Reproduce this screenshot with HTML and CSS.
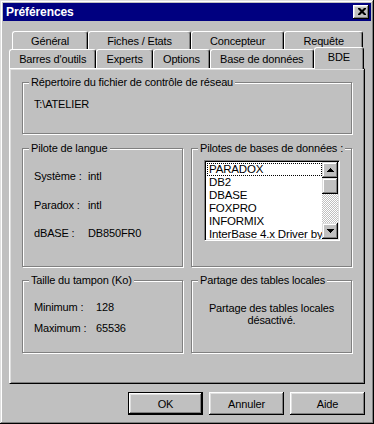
FILE: index.html
```html
<!DOCTYPE html>
<html lang="fr">
  <head>
    <meta charset="UTF-8" />
    <meta name="viewport" content="width=device-width, initial-scale=1.0" />
    <title>Préférences</title>
    <link rel="stylesheet" href="styles.css">
  </head>
  <body>
    <div class="window">
      <div class="titlebar">
        <span class="title">Préférences</span>
        <button class="close" aria-label="Fermer">
          <svg width="8" height="7" viewBox="0 0 8 7">
            <path d="M0 0h2l2 2 2-2h2v1L5.5 3.5 8 6v1H6L4 5 2 7H0V6l2.5-2.5L0 1z" fill="#000" />
          </svg>
        </button>
      </div>

      <div class="content">
        <div class="tabs">
          <div class="tab-row back">
            <div class="tab">Général</div>
            <div class="tab">Fiches / Etats</div>
            <div class="tab">Concepteur</div>
            <div class="tab">Requête</div>
          </div>
          <div class="tab-row front">
            <div class="tab">Barres d'outils</div>
            <div class="tab">Experts</div>
            <div class="tab">Options</div>
            <div class="tab">Base de données</div>
            <div class="tab selected">BDE</div>
          </div>
        </div>

        <div class="panel">
          <div class="group group-network">
            <span class="legend">Répertoire du fichier de contrôle de réseau</span>
            <div class="path">T:\ATELIER</div>
          </div>

          <div class="columns">
            <div class="group group-lang">
              <span class="legend">Pilote de langue</span>
              <div class="fields fields-lang">
                <span>Système :</span><span>intl</span>
                <span>Paradox :</span><span>intl</span>
                <span>dBASE :</span><span>DB850FR0</span>
              </div>
            </div>

            <div class="group group-drivers">
              <span class="legend">Pilotes de bases de données :</span>
              <div class="listbox">
                <div class="items">
                  <div class="item focused">PARADOX</div>
                  <div class="item">DB2</div>
                  <div class="item">DBASE</div>
                  <div class="item">FOXPRO</div>
                  <div class="item">INFORMIX</div>
                  <div class="item">InterBase 4.x Driver by Visigenic</div>
                </div>
                <div class="scrollbar">
                  <div class="arrow">
                    <svg width="7" height="4" viewBox="0 0 7 4"><path d="M3 0h1v1h1v1h1v1h1v1H0V3h1V2h1V1h1z" fill="#000" /></svg>
                  </div>
                  <div class="thumb"></div>
                  <div class="track"></div>
                  <div class="arrow">
                    <svg width="7" height="4" viewBox="0 0 7 4"><path d="M0 0h7v1H6v1H5v1H4v1H3V3H2V2H1V1H0z" fill="#000" /></svg>
                  </div>
                </div>
              </div>
            </div>

            <div class="group group-buffer">
              <span class="legend">Taille du tampon (Ko)</span>
              <div class="fields fields-buffer">
                <span>Minimum :</span><span>128</span>
                <span>Maximum :</span><span>65536</span>
              </div>
            </div>

            <div class="group group-share">
              <span class="legend">Partage des tables locales</span>
              <p class="share-text">Partage des tables locales<br>désactivé.</p>
            </div>
          </div>
        </div>

        <div class="actions">
          <button class="btn default">OK</button>
          <button class="btn">Annuler</button>
          <button class="btn">Aide</button>
        </div>
      </div>
    </div>
  </body>
</html>
```

FILE: styles.css
```css
:root {
  --face: #c0c0c0;
  --light: #dfdfdf;
  --shadow: #808080;
  --navy: #000080;
}

* {
  margin: 0;
  padding: 0;
  box-sizing: border-box;
}

body {
  width: 374px;
  height: 424px;
  overflow: hidden;
  background: var(--face);
  font-family: "Liberation Sans", Arial, sans-serif;
  font-size: 11px;
  letter-spacing: -0.15px;
  color: #000;
}

.window {
  width: 374px;
  height: 424px;
  padding: 3px;
  display: flex;
  flex-direction: column;
  background: var(--face);
  box-shadow: inset -1px -1px #000, inset 1px 1px var(--light),
    inset -2px -2px var(--shadow), inset 2px 2px #fff;
}

.titlebar {
  height: 18px;
  display: flex;
  align-items: center;
  justify-content: space-between;
  padding: 0 2px 0 3px;
  background: var(--navy);
  color: #fff;
}

.title {
  font-weight: bold;
  font-size: 12px;
  letter-spacing: -0.1px;
}

.close {
  width: 16px;
  height: 14px;
  border: none;
  display: flex;
  align-items: center;
  justify-content: center;
  padding: 0 0 1px 1px;
  background: var(--face);
  box-shadow: inset -1px -1px #000, inset 1px 1px #fff,
    inset -2px -2px var(--shadow), inset 2px 2px var(--light);
}

.content {
  flex: 1;
  padding: 10px 6px 0;
}

/* Onglets */
.tab-row {
  display: flex;
}

.tab-row.back {
  height: 18px;
  margin: 0 2px 0 3px;
}

.tab-row.front {
  height: 19px;
  margin-right: 1px;
}

.tab {
  flex: 1 1 auto;
  height: 100%;
  padding-top: 3px;
  line-height: 13px;
  text-align: center;
  white-space: nowrap;
  background: var(--face);
  border: 1px solid;
  border-color: #fff #000 transparent #fff;
  border-bottom: none;
  border-radius: 3px 3px 0 0;
  box-shadow: inset -1px 0 var(--shadow);
}

.tab.selected {
  height: 22px;
  margin-top: -2px;
  padding: 3px 4px 0;
  position: relative;
  z-index: 1;
}

/* Panneau */
.panel {
  height: 316px;
  padding: 13px 12px 0;
  border: 1px solid;
  border-color: #fff #000 #000 #fff;
  box-shadow: inset 1px 1px var(--light), inset -1px -1px var(--shadow);
}

.group {
  position: relative;
  border: 1px solid var(--shadow);
  box-shadow: 1px 1px #fff, inset 1px 1px #fff;
}

.legend {
  position: absolute;
  top: -7px;
  left: 6px;
  padding: 0 2px;
  line-height: 13px;
  background: var(--face);
  white-space: nowrap;
}

.group-network {
  height: 52px;
  padding: 15px 0 0 11px;
  line-height: 13px;
}

.columns {
  display: grid;
  grid-template-columns: 161px 161px;
  column-gap: 8px;
  row-gap: 13px;
  margin-top: 14px;
}

.group-lang,
.group-drivers {
  height: 119px;
}

.group-buffer,
.group-share {
  height: 73px;
}

.fields {
  display: grid;
  line-height: 13px;
  padding-left: 11px;
}

.fields-lang {
  grid-template-columns: 54px auto;
  row-gap: 15.5px;
  padding-top: 21px;
}

.fields-buffer {
  grid-template-columns: 62px auto;
  row-gap: 8px;
  padding-top: 20px;
}

.share-text {
  padding-top: 21px;
  line-height: 12px;
  text-align: center;
}

/* Liste des pilotes */
.group-drivers {
  padding: 11px 0 0 12px;
}

.listbox {
  width: 136px;
  height: 81px;
  display: flex;
  border: 1px solid;
  border-color: var(--shadow) #fff #fff var(--shadow);
  box-shadow: inset 1px 1px #000, inset -1px -1px var(--light);
  background: #fff;
  padding: 1px;
}

.items {
  flex: 1;
  overflow: hidden;
  padding-top: 1px;
}

.item {
  height: 13px;
  line-height: 13px;
  padding-left: 3px;
  white-space: nowrap;
  font-size: 11.5px;
}

.item.focused {
  outline: 1px dotted #000;
  outline-offset: -1px;
  margin-left: 1px;
  padding-left: 2px;
}

.scrollbar {
  width: 16px;
  display: flex;
  flex-direction: column;
}

.arrow,
.thumb {
  height: 16px;
  flex: none;
  display: flex;
  align-items: center;
  justify-content: center;
  background: var(--face);
  box-shadow: inset -1px -1px #000, inset 1px 1px var(--light),
    inset -2px -2px var(--shadow), inset 2px 2px #fff;
}

.track {
  flex: 1;
  background: repeating-conic-gradient(var(--face) 0 25%, #fff 0 50%) 0 0 / 2px 2px;
}

/* Boutons */
.actions {
  display: flex;
  justify-content: flex-end;
  gap: 6px;
  margin-top: 8px;
}

.btn {
  width: 75px;
  height: 23px;
  border: none;
  font: inherit;
  letter-spacing: inherit;
  color: #000;
  background: var(--face);
  box-shadow: inset -1px -1px #000, inset 1px 1px #fff,
    inset -2px -2px var(--shadow), inset 2px 2px var(--light);
}

.btn.default {
  border: 1px solid #000;
}
```
